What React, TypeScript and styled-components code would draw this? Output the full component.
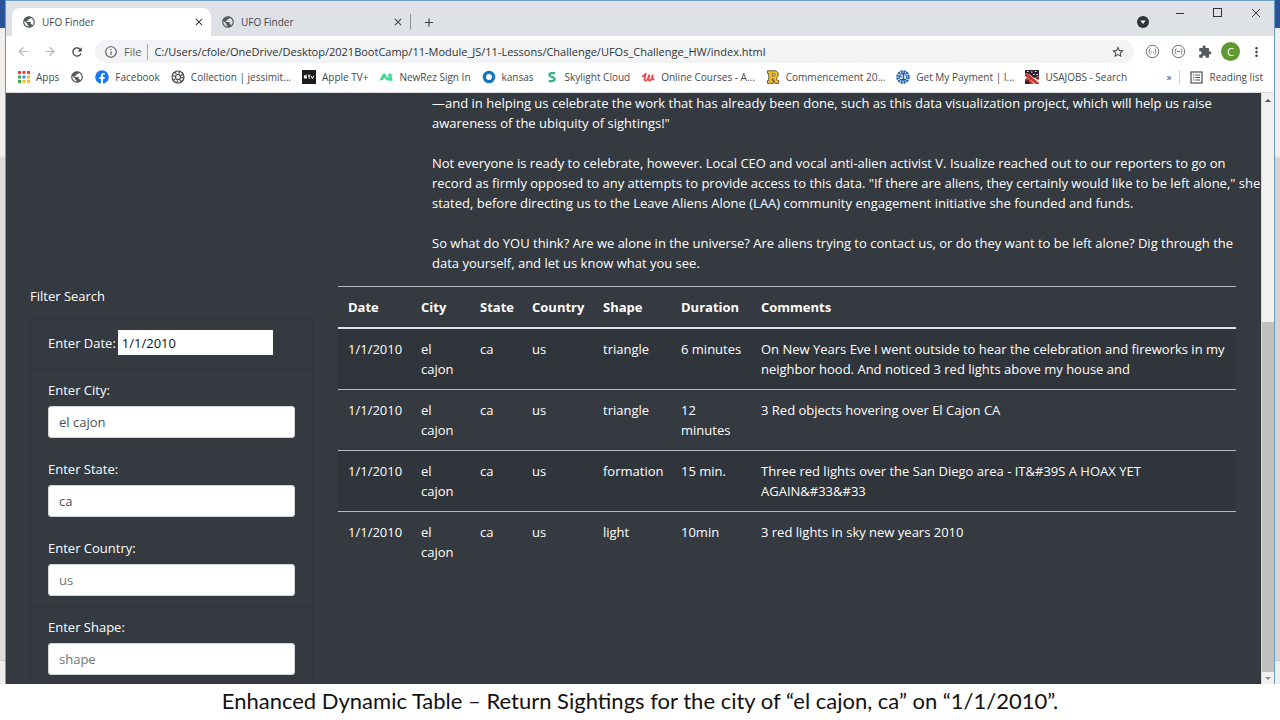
import React from "react";
import styled, { createGlobalStyle, css } from "styled-components";
import {
  MdPublic,
  MdClose,
  MdAdd,
  MdArrowBack,
  MdArrowForward,
  MdRefresh,
  MdInfoOutline,
  MdStarBorder,
  MdExtension,
  MdMoreVert,
} from "react-icons/md";

const GlobalStyle = createGlobalStyle`
  *, *::before, *::after { box-sizing: border-box; }
  body {
    margin: 0;
    background: #fff;
    font-family: "Open Sans", "Noto Sans", sans-serif;
    font-size: 13px;
    line-height: 20px;
  }
  button, input { font: inherit; color: inherit; }
  button { border: 0; padding: 0; background: none; }
  a { color: inherit; text-decoration: none; }
`;

const Slide = styled.div`
  display: flex;
  flex-direction: column;
  height: 100vh;
  overflow: hidden;
`;

const Stage = styled.div`
  display: grid;
  grid-template-columns: 5px minmax(0, 1fr) 5px;
  flex: 1;
  min-height: 0;
`;

const Backdrop = styled.div<{ $tone: string }>`
  background: linear-gradient(#2a5699 28px, #f1efee 28px, #f1efee 156px, ${(p) => p.$tone} 158px);
  display: flex;
  flex-direction: column;
  justify-content: flex-end;

  &::after {
    content: "";
    height: 24px;
    background: #efeeee;
    border-top: 1px solid #c8c8c8;
  }
`;

const Window = styled.div`
  display: flex;
  flex-direction: column;
  min-height: 0;
  border: 1px solid #6a9cc6;
  border-bottom: 0;
  background: #fff;
`;

const TabStrip = styled.div`
  display: flex;
  align-items: flex-end;
  height: 35px;
  flex: none;
  padding-left: 6px;
  background: #dee1e6;
  color: #45494d;
`;

const Tab = styled.div<{ $active?: boolean }>`
  display: flex;
  align-items: center;
  width: 199px;
  height: 28px;
  padding: 0 6px 0 10px;
  border-radius: 8px 8px 0 0;
  font-size: 10px;
  ${(p) => p.$active && css`background: #fff;`}
`;

const TabTitle = styled.button`
  display: flex;
  flex: 1;
  align-items: center;
  gap: 6px;
`;

const IconButton = styled.button<{ $size?: number }>`
  display: flex;
  align-items: center;
  justify-content: center;
  flex: none;
  width: ${(p) => p.$size ?? 12}px;
  height: ${(p) => p.$size ?? 12}px;
  color: #3c4043;
`;

const StripDivider = styled.span`
  width: 1px;
  height: 16px;
  margin: 0 11px 6px 0;
  background: #8f9398;
`;

const NewTab = styled.div`
  flex: 1;
  padding-bottom: 7px;
`;

const WindowControls = styled.div`
  display: flex;
  align-self: flex-start;
  gap: 26px;
  padding: 6px 12px 0 0;
`;

const TabSearch = styled.div`
  padding: 0 25px 8px 0;
`;

const Toolbar = styled.div`
  display: flex;
  align-items: center;
  height: 31px;
  flex: none;
  gap: 14px;
  padding: 0 10px;
  color: #5f6368;
`;

const NavButtons = styled.div`
  display: flex;
  gap: 13px;
`;

const AddressBar = styled.label`
  display: flex;
  align-items: center;
  flex: 1;
  height: 23px;
  margin: 0 -3px 0 -3px;
  padding: 0 9px;
  gap: 6px;
  border-radius: 12px;
  background: #f1f3f4;
  font-size: 11px;
`;

const AddressInput = styled.input`
  flex: 1;
  min-width: 0;
  height: 16px;
  border: 0;
  border-left: 1px solid #a5a8ac;
  padding: 0 0 0 6px;
  background: transparent;
  color: #303336;
  outline: 0;
`;

const Extensions = styled.div`
  display: flex;
  align-items: center;
  gap: 11px;
`;

const Avatar = styled.button`
  width: 19px;
  height: 19px;
  margin: 0 -2px;
  border-radius: 50%;
  background: #5f9a31;
  color: #fff;
  font-size: 11px;
  line-height: 19px;
`;

const Bookmarks = styled.nav`
  display: flex;
  align-items: center;
  flex: none;
  height: 26px;
  padding: 0 11px 5px 12px;
  gap: 11px;
  border-bottom: 1px solid #d9dbde;
  color: #45494d;
  font-size: 10px;
  white-space: nowrap;
`;

const Bookmark = styled.a`
  display: flex;
  align-items: center;
  gap: 6px;

  svg { flex: none; }
`;

const BookmarkEnd = styled.div`
  display: flex;
  align-items: center;
  gap: 8px;
  margin-left: auto;
`;

const BarDivider = styled.span`
  width: 1px;
  height: 14px;
  margin-right: 2px;
  background: #d0d3d6;
`;

const Viewport = styled.div`
  display: flex;
  flex: 1;
  min-height: 0;
`;

const Content = styled.main`
  flex: 1;
  min-width: 0;
  overflow: hidden;
  background: #343a40;
  color: #fff;
`;

const Article = styled.article`
  padding-left: 426px;
  white-space: nowrap;

  p { margin: 0 0 20px; }
  p:last-child { margin-bottom: 13px; }
`;

const Columns = styled.div`
  display: grid;
  grid-template-columns: 283px minmax(0, 1fr);
  gap: 25px;
  align-items: start;
  padding: 0 25px 0 24px;
`;

const FilterTitle = styled.h2`
  margin: 0 0 12px;
  font-size: 13px;
  font-weight: 400;
`;

const FilterList = styled.ul`
  list-style: none;
  margin: 0;
  padding: 0;
  border: 1px solid #2f343a;
`;

const FilterItem = styled.li<{ $inline?: boolean }>`
  display: flex;
  flex-direction: ${(p) => (p.$inline ? "row" : "column")};
  align-items: ${(p) => (p.$inline ? "center" : "stretch")};
  gap: ${(p) => (p.$inline ? 2 : 6)}px;
  padding: ${(p) => (p.$inline ? "11px 17px 14px" : "10px 17px")};
  border-bottom: 1px solid #2f343a;
  white-space: nowrap;
`;

const DateInput = styled.input`
  width: 155px;
  height: 25px;
  padding: 0 3px;
  border: 1px solid #fff;
  background: #fff;
  color: #111;
`;

const TextInput = styled.input`
  height: 32px;
  padding: 0 10px;
  border: 1px solid #ced4da;
  border-radius: 3px;
  background: #fff;
  color: #495057;

  &::placeholder { color: #6c757d; opacity: 1; }
`;

const Sightings = styled.table`
  width: 100%;
  table-layout: fixed;
  border-collapse: separate;
  border-spacing: 0;
  text-align: left;
  white-space: nowrap;

  th, td {
    padding: 10px;
    vertical-align: top;
    border-top: 1px solid #b4b9be;
  }
  th { border-bottom: 1px solid #dee2e6; font-weight: 700; }
  tbody tr:first-child td { border-top-color: #dee2e6; }
  tbody tr:nth-child(odd) { background: #30353b; }
`;

const Col = styled.col<{ $w?: number }>`
  width: ${(p) => (p.$w ? `${p.$w}px` : "auto")};
`;

const ScrollTrack = styled.div`
  display: flex;
  flex-direction: column;
  align-items: center;
  flex: none;
  width: 13px;
  border-left: 1px solid #d8d8d8;
  background: #f1f1f1;
`;

const ScrollGap = styled.div`
  flex: 217;
`;

const ScrollThumb = styled.div`
  flex: 350;
  width: 100%;
  background: #c1c1c1;
`;

const Caption = styled.p`
  flex: none;
  height: 36px;
  margin: 0;
  color: #111;
  font-family: Lato, sans-serif;
  font-size: 22px;
  line-height: 34px;
  text-align: center;
  white-space: nowrap;
`;

const FacebookIcon = () => (
  <svg width="14" height="14" viewBox="0 0 14 14">
    <circle cx="7" cy="7" r="6.8" fill="#1877f2" />
    <path d="M6 14V9H4.3V7.1H6V5.6c0-1.8 1-2.7 2.6-2.7.6 0 1.2.1 1.2.1v1.6H9c-.8 0-1 .5-1 1v1.5h1.8L9.5 9H8v5z" fill="#fff" />
  </svg>
);

const AppsIcon = () => (
  <svg width="12" height="12" viewBox="0 0 12 12">
    {[["#e8453c", "#e8453c", "#e8453c"], ["#3aa757", "#4285f4", "#f9bb2d"], ["#3aa757", "#f9bb2d", "#f9bb2d"]].map((row, y) =>
      row.map((fill, x) => <rect key={`${x}${y}`} x={x * 4.5} y={y * 4.5} width="3" height="3" fill={fill} />)
    )}
  </svg>
);

const CollectionIcon = () => (
  <svg width="14" height="14" viewBox="0 0 14 14" fill="none" stroke="#3f4347">
    <circle cx="7" cy="7" r="6" strokeWidth="1.2" />
    <circle cx="7" cy="7" r="2.5" strokeWidth="1.2" />
    <circle cx="7" cy="7" r="4.3" strokeWidth="2" strokeDasharray="1.2 2.177" />
  </svg>
);

const AppleTvIcon = () => (
  <svg width="14" height="14" viewBox="0 0 14 14">
    <rect width="14" height="14" fill="#1c1c1e" />
    <path d="M3.7 5.3c.5-.2 1.1 0 1.3.3-.7.5-.5 1.5.2 1.8-.3.8-.7 1.4-1.2 1.2-.3-.1-.5-.1-.8 0C2.4 8.900 1.5 7.4 1.8 6.3c.2-.9 1-1.2 1.9-1zM3.6 5c0-.6.4-1 .9-1.1 0 .6-.4 1-.9 1.1z" fill="#fff" />
    <path d="M7 4.5v3.2c0 .7.3.9 1.2.8M6 5.8h2.1M9 5.8l1.4 2.700 1.4-2.700" stroke="#fff" fill="none" />
  </svg>
);

const NewRezIcon = () => (
  <svg width="14" height="14" viewBox="0 0 14 14">
    <path d="M.5 10.500L3 5.200C4 3 6.200 3 7 5.200c.6 1.600 1.400 2.600 2.500 2.600V6H8l3-3 3 3h-1.600l1.400 4.500C9 11 6.500 10.800 5.500 7.500 5 9.500 4 10.500.5 10.500z" fill="#3ddc94" />
  </svg>
);

const KansasIcon = () => (
  <svg width="14" height="14" viewBox="0 0 14 14">
    <circle cx="7" cy="7" r="4.6" fill="none" stroke="#1477bd" strokeWidth="3.4" />
  </svg>
);

const SkylightIcon = () => (
  <svg width="14" height="14" viewBox="0 0 14 14" fill="none" stroke="#37b08c" strokeWidth="2.2">
    <path d="M10.200 3.200H6.600C5 3.200 4.400 4 4.400 4.900c0 2.300 5.300 1.600 5.300 4.200 0 1.200-.8 1.900-2.200 1.900H3.700" />
    <path d="M3.700 12.300h3.500" stroke="#9bd9c5" strokeWidth=".8" />
  </svg>
);

const UdemyIcon = () => (
  <svg width="14" height="14" viewBox="0 0 14 14" fill="none" stroke="#e8484f" strokeWidth="1.8" strokeLinecap="round">
    <path d="M1.800 6.200C3.300 5.900 4.300 4.400 5 3.200 4.200 6 2.600 10.300 4.200 10.600c1.800.3 3.300-3 4.300-6.200-.8 3-1.300 6 0 6.200 1.700.2 2.800-3.400 3.300-6-.3 3-.6 5.600 1 4.800" />
  </svg>
);

const RollinsIcon = () => (
  <svg width="14" height="14" viewBox="0 0 14 14">
    <path
      d="M1.500.800h7.400c4.200 0 4.400 6 1.400 7.100l1.200 2.600h1.200v2.900H9.100L6.900 8.600H6.300v1.900h1.200v2.900h-6v-2.900h1.200V3.700H1.500zM6.300 3.600v2.200h1.800c1.300 0 1.300-2.200 0-2.200z"
      fill="#f0bd2c"
      stroke="#4d4630"
      strokeWidth=".8"
      fillRule="evenodd"
    />
  </svg>
);

const PaymentIcon = () => (
  <svg width="14" height="14" viewBox="0 0 14 14" fill="none">
    <circle cx="7" cy="7" r="5.600" stroke="#2a62a5" strokeWidth="2.4" strokeDasharray="2.2 .7" />
    <circle cx="7" cy="7" r="3.7" fill="#d9e7f5" stroke="#3c75b5" />
    <path d="M7.500 3.500v6M5.500 3.500h3.500M5 9.700h5M3.600 5.800l2 .8" stroke="#1d559c" strokeWidth="1.300" />
  </svg>
);

const UsaJobsIcon = () => (
  <svg width="14" height="14" viewBox="0 0 14 14">
    <rect width="14" height="14" fill="#f3e6e2" />
    <path d="M0 0h14v6L9 8 4 4 0 3z" fill="#2b2230" />
    <path d="M0 3l3 1 11 9v1h-3L0 6z" fill="#c9352c" />
    <path d="M0 9l3-1 6 6H0z" fill="#c9352c" />
    <path d="M0 11l3-1 2 4H0z" fill="#3a1d28" />
    <path d="M10 8l4-2v3l-1 1z" fill="#8c2a30" />
    <path d="M2 1.500h1.500M6 2h1.500M10 1.500h1.500M8 4.500h1.500M11.500 4.500H13" stroke="#fff" />
  </svg>
);

const BraceIcon = ({ mark }: { mark: "dots" | "dash" }) => (
  <svg width="15" height="15" viewBox="0 0 15 15" fill="none" stroke="#6b6f74">
    <circle cx="7.5" cy="7.5" r="6.2" strokeWidth="1" />
    <path d="M5.500 4.800c-1 0-1 .3-1 1.200 0 1-.1 1.300-.8 1.500.7.200.8.500.8 1.500 0 .9 0 1.200 1 1.200M9.500 4.800c1 0 1 .3 1 1.200 0 1 .1 1.300.8 1.500-.7.200-.8.500-.8 1.500 0 .9 0 1.200-1 1.200" strokeWidth=".9" />
    <path d={mark === "dash" ? "M5.800 7.500h3.400" : "M6 8h1M8 8h1"} />
  </svg>
);

const ReadingIcon = () => (
  <svg width="13" height="13" viewBox="0 0 13 13" fill="none" stroke="#4a4e52">
    <rect x="1" y="1" width="11" height="11" strokeWidth="1.2" />
    <path d="M3 4h1.300M5.300 4H10M3 6.500h1.300M5.300 6.500H10M3 9h1.300M5.300 9H10" />
  </svg>
);

const bookmarks: { label?: string; icon: React.ReactNode }[] = [
  { label: "Apps", icon: <AppsIcon /> },
  { icon: <MdPublic size={14} color="#55595e" /> },
  { label: "Facebook", icon: <FacebookIcon /> },
  { label: "Collection | jessimit...", icon: <CollectionIcon /> },
  { label: "Apple TV+", icon: <AppleTvIcon /> },
  { label: "NewRez Sign In", icon: <NewRezIcon /> },
  { label: "kansas", icon: <KansasIcon /> },
  { label: "Skylight Cloud", icon: <SkylightIcon /> },
  { label: "Online Courses - A...", icon: <UdemyIcon /> },
  { label: "Commencement 20...", icon: <RollinsIcon /> },
  { label: "Get My Payment | I...", icon: <PaymentIcon /> },
  { label: "USAJOBS - Search", icon: <UsaJobsIcon /> },
];

const paragraphs = [
  [
    "—and in helping us celebrate the work that has already been done, such as this data visualization project, which will help us raise",
    "awareness of the ubiquity of sightings!\"",
  ],
  [
    "Not everyone is ready to celebrate, however. Local CEO and vocal anti-alien activist V. Isualize reached out to our reporters to go on",
    "record as firmly opposed to any attempts to provide access to this data. \"If there are aliens, they certainly would like to be left alone,\" she",
    "stated, before directing us to the Leave Aliens Alone (LAA) community engagement initiative she founded and funds.",
  ],
  [
    "So what do YOU think? Are we alone in the universe? Are aliens trying to contact us, or do they want to be left alone? Dig through the",
    "data yourself, and let us know what you see.",
  ],
];

const filters = [
  { id: "city", label: "Enter City:", hint: "el cajon", value: "el cajon" },
  { id: "state", label: "Enter State:", hint: "ca", value: "ca" },
  { id: "country", label: "Enter Country:", hint: "us" },
  { id: "shape", label: "Enter Shape:", hint: "shape" },
];

const headings = ["Date", "City", "State", "Country", "Shape", "Duration", "Comments"];
const columnWidths = [73, 59, 52, 71, 78, 80];

const sightings = [
  ["1/1/2010", "el\ncajon", "ca", "us", "triangle", "6 minutes", "On New Years Eve I went outside to hear the celebration and fireworks in my\nneighbor hood. And noticed 3 red lights above my house and"],
  ["1/1/2010", "el\ncajon", "ca", "us", "triangle", "12\nminutes", "3 Red objects hovering over El Cajon CA"],
  ["1/1/2010", "el\ncajon", "ca", "us", "formation", "15 min.", "Three red lights over the San Diego area - IT&#39S A HOAX YET\nAGAIN&#33&#33"],
  ["1/1/2010", "el\ncajon", "ca", "us", "light", "10min", "3 red lights in sky new years 2010"],
];

const Lines = ({ lines }: { lines: string[] }) => (
  <>
    {lines.map((line, i) => (
      <React.Fragment key={i}>
        {i > 0 && <br />}
        {line}
      </React.Fragment>
    ))}
  </>
);

const BrowserTab = ({ active }: { active?: boolean }) => (
  <Tab $active={active}>
    <TabTitle>
      <MdPublic size={14} color="#55595e" />
      UFO Finder
    </TabTitle>
    <IconButton aria-label="Close tab"><MdClose size={12} /></IconButton>
  </Tab>
);

export default function App() {
  return (
    <>
      <GlobalStyle />
      <Slide>
        <Stage>
          <Backdrop $tone="#dcdcdc" />
          <Window>
            <TabStrip>
              <BrowserTab active />
              <BrowserTab />
              <StripDivider />
              <NewTab>
                <IconButton $size={14} aria-label="New tab"><MdAdd size={15} /></IconButton>
              </NewTab>
              <TabSearch>
                <IconButton aria-label="Search tabs">
                  <svg width="12" height="12" viewBox="0 0 12 12">
                    <circle cx="6" cy="6" r="6" fill="#303337" />
                    <path d="M3.3 4.4h5.4L6 8z" fill="#fff" />
                  </svg>
                </IconButton>
              </TabSearch>
              <WindowControls>
                <IconButton aria-label="Minimize">
                  <svg width="10" height="10" viewBox="0 0 10 10"><path d="M1 5.500h8" stroke="#333" /></svg>
                </IconButton>
                <IconButton aria-label="Maximize">
                  <svg width="10" height="10" viewBox="0 0 10 10"><rect x=".5" y=".5" width="8" height="8" fill="none" stroke="#333" /></svg>
                </IconButton>
                <IconButton aria-label="Close window">
                  <svg width="10" height="10" viewBox="0 0 10 10"><path d="M1 1l8 8M9 1L1 9" stroke="#333" /></svg>
                </IconButton>
              </WindowControls>
            </TabStrip>

            <Toolbar>
              <NavButtons>
                <IconButton $size={14} aria-label="Back"><MdArrowBack size={15} color="#b5b8bb" /></IconButton>
                <IconButton $size={14} aria-label="Forward"><MdArrowForward size={15} color="#b5b8bb" /></IconButton>
                <IconButton $size={14} aria-label="Reload"><MdRefresh size={16} /></IconButton>
              </NavButtons>
              <AddressBar>
                <MdInfoOutline size={14} />
                File
                <AddressInput
                  type="text"
                  aria-label="Address"
                  defaultValue="C:/Users/cfole/OneDrive/Desktop/2021BootCamp/11-Module_JS/11-Lessons/Challenge/UFOs_Challenge_HW/index.html"
                />
                <IconButton $size={14} aria-label="Bookmark this page"><MdStarBorder size={14} /></IconButton>
              </AddressBar>
              <Extensions>
                <IconButton $size={15} aria-label="JSON viewer"><BraceIcon mark="dots" /></IconButton>
                <IconButton $size={15} aria-label="JSON formatter"><BraceIcon mark="dash" /></IconButton>
                <IconButton $size={15} aria-label="Extensions"><MdExtension size={14} color="#55595e" /></IconButton>
                <Avatar aria-label="Profile">C</Avatar>
                <IconButton $size={15} aria-label="Menu"><MdMoreVert size={16} /></IconButton>
              </Extensions>
            </Toolbar>

            <Bookmarks>
              {bookmarks.map((b, i) => (
                <Bookmark key={i} href="#" aria-label={b.label ?? "Site"}>
                  {b.icon}
                  {b.label}
                </Bookmark>
              ))}
              <BookmarkEnd>
                <button aria-label="More bookmarks">»</button>
                <BarDivider />
                <Bookmark href="#">
                  <ReadingIcon />
                  Reading list
                </Bookmark>
              </BookmarkEnd>
            </Bookmarks>

            <Viewport>
              <Content>
                <Article>
                  {paragraphs.map((lines, i) => (
                    <p key={i}><Lines lines={lines} /></p>
                  ))}
                </Article>
                <Columns>
                  <form>
                    <FilterTitle>Filter Search</FilterTitle>
                    <FilterList>
                      <FilterItem $inline>
                        <label htmlFor="datetime">Enter Date:</label>
                        <DateInput id="datetime" type="text" defaultValue="1/1/2010" />
                      </FilterItem>
                      {filters.map((f) => (
                        <FilterItem key={f.id}>
                          <label htmlFor={f.id}>{f.label}</label>
                          <TextInput id={f.id} type="text" placeholder={f.hint} defaultValue={f.value} />
                        </FilterItem>
                      ))}
                    </FilterList>
                  </form>
                  <Sightings>
                    <colgroup>
                      {columnWidths.map((w, i) => <Col key={i} $w={w} />)}
                      <Col />
                    </colgroup>
                    <thead>
                      <tr>{headings.map((h) => <th key={h} scope="col">{h}</th>)}</tr>
                    </thead>
                    <tbody>
                      {sightings.map((row, i) => (
                        <tr key={i}>
                          {row.map((cell, j) => <td key={j}><Lines lines={cell.split("\n")} /></td>)}
                        </tr>
                      ))}
                    </tbody>
                  </Sightings>
                </Columns>
              </Content>
              <ScrollTrack>
                <svg width="12" height="12" viewBox="0 0 12 12"><path d="M3 9l3-3 3 3z" fill="#505050" /></svg>
                <ScrollGap />
                <ScrollThumb />
                <svg width="12" height="12" viewBox="0 0 12 12"><path d="M3 5h6L6 8z" fill="#8f8f8f" /></svg>
              </ScrollTrack>
            </Viewport>
          </Window>
          <Backdrop $tone="#d6d3d3" />
        </Stage>
        <Caption>Enhanced Dynamic Table – Return Sightings for the city of “el cajon, ca” on “1/1/2010”.</Caption>
      </Slide>
    </>
  );
}
